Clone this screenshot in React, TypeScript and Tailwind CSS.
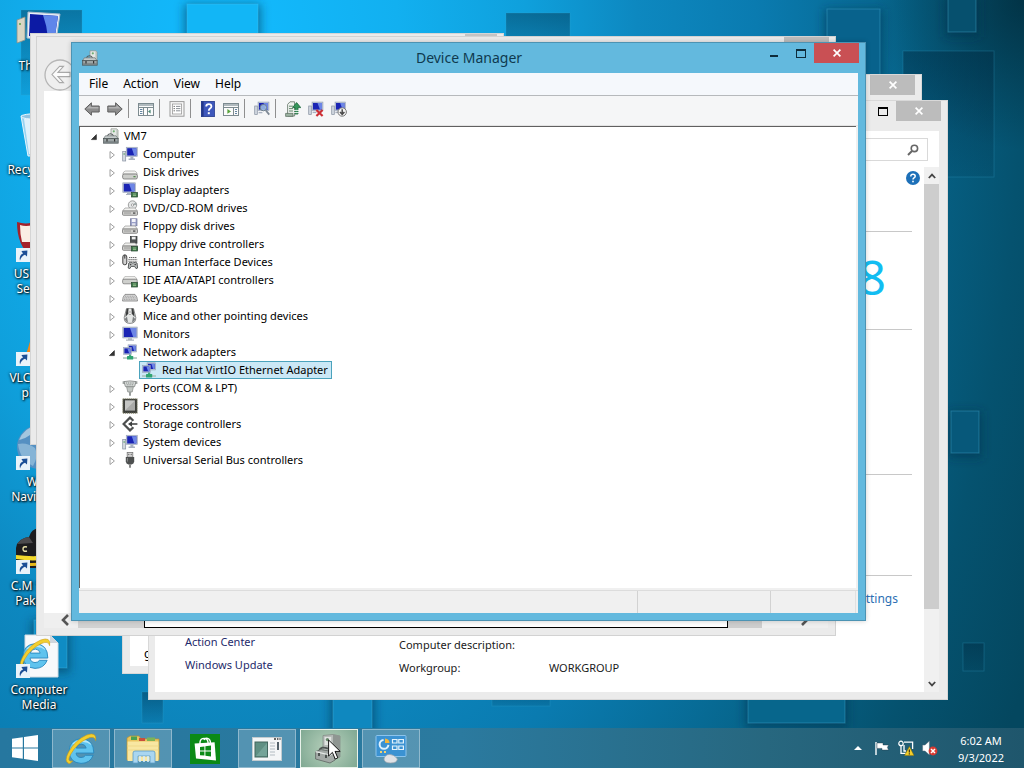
import type { ReactNode } from 'react';

interface IconProps {
  className?: string;
}

interface TreeItem {
  label: string;
  icon: (props: IconProps) => ReactNode;
  children?: TreeItem[];
}

const ICON = 'size-4 shrink-0';

function Svg({ className = ICON, box = '0 0 16 16', children }: { className?: string; box?: string; children: ReactNode }) {
  return (
    <svg viewBox={box} className={className} aria-hidden="true">
      {children}
    </svg>
  );
}

/* ---------- shared glyph parts ---------- */

function Screen({ x, y, w, h }: { x: number; y: number; w: number; h: number }) {
  return (
    <g>
      <rect x={x} y={y} width={w} height={h} fill="#b9c3d6" stroke="#8e9ab0" strokeWidth=".5" />
      <rect x={x + 1} y={y + 1} width={w - 2} height={h - 2} fill="#1a24b4" />
      <path d={`M${x + w / 2} ${y + 1}H${x + w - 1}V${y + h - 1}H${x + w * 0.72}Z`} fill="#6d86e6" />
    </g>
  );
}

function Drive({ y = 8 }: { y?: number }) {
  return (
    <g>
      <path d={`M3 ${y}H13L15.5 ${y + 3}H.5Z`} fill="#f1f1ef" stroke="#9a9a9a" strokeWidth=".7" />
      <rect x=".5" y={y + 3} width="15" height="4.3" rx="1" fill="#cfcfcc" stroke="#777" strokeWidth=".8" />
      <path d={`M2 ${y + 5}H9`} stroke="#8a8a8a" strokeWidth=".8" />
      <rect x="11" y={y + 4.4} width="2.4" height="1.4" fill="#555" />
    </g>
  );
}

function Chip() {
  return (
    <g>
      <rect x="9.5" y="10.5" width="6" height="4.5" fill="#3f7a4c" stroke="#24452c" strokeWidth=".7" />
      <path d="M11 12H14M11 13.6H14" stroke="#b6d2a4" strokeWidth=".7" />
    </g>
  );
}

/* ---------- device icons ---------- */

function DeviceManagerIcon({ className }: IconProps) {
  return (
    <Svg className={className}>
      <path d="M8 .8H13.6L15 2V11H8Z" fill="#e5e8e5" stroke="#899089" strokeWidth=".7" />
      <path d="M13.4 1V11H15V2Z" fill="#b9c0ba" />
      <circle cx="10.8" cy="3.3" r="1.1" fill="#6fae72" />
      <path d="M4.5 8C5 5.2 9.5 5 10.5 8" fill="none" stroke="#565c5e" strokeWidth="1.1" />
      <path d="M2.4 7.8H13L15 10.5H.6Z" fill="#c5cbcb" stroke="#6b7375" strokeWidth=".7" />
      <rect x=".6" y="10.4" width="14.6" height="4.8" fill="#828b8c" stroke="#4c5456" strokeWidth=".7" />
      <path d="M1.4 12H14.4" stroke="#c9cfcf" strokeWidth=".8" />
      <path d="M4 11V13.4M11.6 11V13.4" stroke="#333" strokeWidth="1.2" />
    </Svg>
  );
}

function ComputerIcon({ className }: IconProps) {
  return (
    <Svg className={className}>
      <rect x=".7" y="5.5" width="3" height="9.5" fill="#d5dae0" stroke="#8791a0" strokeWidth=".7" />
      <path d="M1.4 8H3" stroke="#4c9c58" />
      <Screen x={4.2} y={1.2} w={11.2} h={9.3} />
      <path d="M8.4 10.8H11.4V12.6H13V14H6.6V12.6H8.4Z" fill="#a9b2c0" />
    </Svg>
  );
}

function DiskIcon({ className }: IconProps) {
  return (
    <Svg className={className}>
      <path d="M3.2 7H12.8Q14.6 7.4 15.3 10.2H.7Q1.4 7.4 3.2 7Z" fill="#f5f5f3" stroke="#a5a5a3" strokeWidth=".7" />
      <rect x=".6" y="10" width="14.8" height="5" rx="1.6" fill="#cccdca" stroke="#737373" strokeWidth=".8" />
      <rect x="11.4" y="12" width="2.2" height="1.3" fill="#5a8d55" />
    </Svg>
  );
}

function DisplayIcon({ className }: IconProps) {
  return (
    <Svg className={className}>
      <Screen x={0.8} y={0.8} w={12.6} h={9.7} />
      <path d="M5 10.8H9V13H4V12H5Z" fill="#a9b2c0" />
      <Chip />
    </Svg>
  );
}

function DvdIcon({ className }: IconProps) {
  return (
    <Svg className={className}>
      <circle cx="10.5" cy="5" r="4.2" fill="#e4e6e6" stroke="#8b8b8b" strokeWidth=".8" />
      <path d="M10.5 5L13.6 2.2A4 4 0 0 1 14.6 5Z" fill="#9fa9a9" />
      <circle cx="10.5" cy="5" r="1.2" fill="#fff" stroke="#777" strokeWidth=".6" />
      <Drive />
    </Svg>
  );
}

function FloppyIcon({ className }: IconProps) {
  return (
    <Svg className={className}>
      <rect x="8.4" y=".8" width="6.6" height="7" fill="#9aa0c8" stroke="#6e7396" strokeWidth=".7" />
      <rect x="9.8" y="1" width="3.8" height="3" fill="#f4f4fa" />
      <rect x="10" y="5.2" width="3.4" height="2.4" fill="#e2e3ee" />
      <Drive />
    </Svg>
  );
}

function FloppyControllerIcon({ className }: IconProps) {
  return (
    <Svg className={className}>
      <rect x="8.4" y=".6" width="6.6" height="6.6" fill="#4f5354" stroke="#2f3232" strokeWidth=".7" />
      <rect x="9.8" y=".8" width="3.8" height="2.6" fill="#eee" />
      <Drive y={7} />
      <Chip />
    </Svg>
  );
}

function HidIcon({ className }: IconProps) {
  return (
    <Svg className={className}>
      <path d="M.8 3Q.8 .8 2.8 .8T4.8 3V9Q4.8 10.8 2.8 10.8T.8 9Z" fill="#d2d2d2" stroke="#444" strokeWidth="1" />
      <path d="M2.8 1V4.6" stroke="#333" />
      <path d="M7 3.5H14.5M6.4 5.4H15.2M6.4 7.2H15.2" stroke="#666" strokeDasharray="1.4 .6" />
      <path d="M6.8 9Q8 7.6 10.8 9 13.8 7.6 15 9L15.6 14Q14 16 12.6 12.4H9.2Q7.8 16 6.2 14Z" fill="#b9bcbc" stroke="#4b4f4f" strokeWidth=".9" />
      <circle cx="8.6" cy="10.6" r=".8" fill="#444" />
      <circle cx="13.2" cy="10.6" r=".8" fill="#444" />
    </Svg>
  );
}

function IdeIcon({ className }: IconProps) {
  return (
    <Svg className={className}>
      <path d="M2.8 4.6H13L15.2 7.4H.8Z" fill="#f6f6f4" stroke="#a8a8a6" strokeWidth=".7" />
      <rect x=".6" y="7.2" width="14.6" height="4.6" rx="1.4" fill="#cfd0cd" stroke="#7c7c7c" strokeWidth=".8" />
      <Chip />
    </Svg>
  );
}

function KeyboardIcon({ className }: IconProps) {
  return (
    <Svg className={className}>
      <path d="M3 4.4H13Q15.4 6.6 15.5 11H.5Q.6 6.6 3 4.4Z" fill="#dcdcdc" stroke="#7c7c7c" strokeWidth=".8" />
      <path d="M3 6.2H13M2.4 7.8H13.6M2 9.3H14" stroke="#8a8a8a" strokeDasharray="1.1 .6" strokeWidth=".8" />
    </Svg>
  );
}

function MouseIcon({ className }: IconProps) {
  return (
    <Svg className={className}>
      <path d="M4.5 .6Q8 -.4 11.5 .6L13.8 9.5Q14 15.4 8 15.4T2.2 9.5Z" fill="#e4e6e5" stroke="#6e7070" strokeWidth=".8" />
      <path d="M4.6 .8L6.6 .5 6 6 3.4 9Z" fill="#3a3c3c" />
      <path d="M11.4 .8L9.4 .5 10 6 12.6 9Z" fill="#3a3c3c" />
      <circle cx="8" cy="5.2" r="1.4" fill="#fff" stroke="#777" strokeWidth=".6" />
      <path d="M2.8 11L5 8.6 6 14.8Q3.4 14 2.8 11ZM13.2 11L11 8.6 10 14.8Q12.6 14 13.2 11Z" fill="#7b7e80" />
    </Svg>
  );
}

function MonitorIcon({ className }: IconProps) {
  return (
    <Svg className={className}>
      <Screen x={0.8} y={1} w={14.4} h={11} />
      <path d="M6 12.2H10V13.4H12V14.8H4V13.4H6Z" fill="#aeb5c0" />
    </Svg>
  );
}

function NetworkIcon({ className }: IconProps) {
  return (
    <Svg className={className}>
      <Screen x={6} y={0.8} w={8.6} h={7.2} />
      <Screen x={1.4} y={3.4} w={8} h={7} />
      <path d="M7 10.6H9.2V12.6H7Z" fill="#44ad7d" />
      <path d="M1 14H15" stroke="#a7bdb4" strokeWidth="1.4" />
      <rect x="5" y="12" width="6.2" height="3.6" rx=".6" fill="#2fa572" />
    </Svg>
  );
}

function PortsIcon({ className }: IconProps) {
  return (
    <Svg className={className}>
      <path d="M.6 1.2H3V4H.6ZM13 1.2H15.4V4H13Z" fill="#a3a8a6" />
      <path d="M2 1.6Q8 .2 14 1.6L12.6 6.6H3.4Z" fill="#d5d9d7" stroke="#7d8280" strokeWidth=".8" />
      <path d="M4.2 3H12M4.8 4.8H11.4" stroke="#7b817e" strokeDasharray=".9 .9" />
      <path d="M4.6 6.8H11.4L10.2 12H5.8Z" fill="#c1c6c3" stroke="#858a87" strokeWidth=".7" />
      <path d="M8 12V15.8" stroke="#999e9c" strokeWidth="2" />
    </Svg>
  );
}

function ProcessorIcon({ className }: IconProps) {
  return (
    <Svg className={className}>
      <rect x=".8" y=".8" width="14.4" height="14.4" fill="#3d3f3b" stroke="#8b8c6e" strokeDasharray="1 1" />
      <rect x="3" y="2.6" width="10" height="10" fill="#a9aaa8" />
      <path d="M3 2.6H13L3 12.6Z" fill="#c4c5c3" />
    </Svg>
  );
}

function StorageIcon({ className }: IconProps) {
  return (
    <Svg className={className}>
      <path d="M11.4 4.8L8 1.6 1.6 8 8 14.4 11.4 11.2" fill="none" stroke="#4d4f4f" strokeWidth="2.2" />
      <path d="M8 8H15.4" stroke="#5a5c5c" strokeWidth="1.8" />
      <path d="M10 5.2V10.8L6 8Z" fill="#3c3e3e" />
    </Svg>
  );
}

function UsbIcon({ className }: IconProps) {
  return (
    <Svg className={className}>
      <rect x="5.2" y=".5" width="5.6" height="4.6" fill="#dcdcdc" stroke="#777" strokeWidth=".8" />
      <path d="M6.8 1.8V3.2M9.2 1.8V3.2" stroke="#555" />
      <path d="M3.8 5H12.2V9.6Q12 12 9.6 12.6H6.4Q4 12 3.8 9.6Z" fill="#4d4f4f" />
      <path d="M5.4 6V9.6" stroke="#8d8f8f" />
      <path d="M8 12.6V15.8" stroke="#6b6d6d" strokeWidth="1.6" />
    </Svg>
  );
}

/* ---------- toolbar icons ---------- */

function ArrowIcon({ flip }: { flip?: boolean }) {
  return (
    <Svg className={flip ? 'size-4 -scale-x-100' : 'size-4'}>
      <path d="M.8 8L7.4 1.8V5H15.2V11H7.4V14.2Z" fill="#8d8d8d" stroke="#5f5f5f" strokeWidth="1" />
      <path d="M2.6 7.6L6.6 4V6H14.4V7.6Z" fill="#b2b2b2" />
    </Svg>
  );
}

function PaneIcon({ flip }: { flip?: boolean }) {
  return (
    <Svg className="size-4">
      <rect x=".5" y="2.5" width="15" height="12" fill="#fbfbfb" stroke="#7d8b90" />
      <path d="M1 4H15" stroke="#9eabb0" strokeWidth="1.6" />
      <path d="M1 6.5H15" stroke="#7d8b90" />
      {flip ? (
        <g>
          <path d="M10.5 6.5V14" stroke="#7d8b90" />
          <path d="M12 8.5H14M12 10.5H14M12 12.5H14" stroke="#6384a0" />
          <path d="M4.4 8L8 10.4 4.4 12.8Z" fill="#58a33c" />
        </g>
      ) : (
        <g>
          <path d="M5.5 6.5V14M9.5 6.5V14" stroke="#7d8b90" />
          <path d="M2 8.5H4.4M2 10.5H4.4M2 12.5H4.4" stroke="#6384a0" />
          <path d="M12.6 8.4L10 10.4 12.6 12.4Z" fill="#4c8a76" />
        </g>
      )}
    </Svg>
  );
}

function PropertiesIcon() {
  return (
    <Svg className="size-4">
      <rect x="1" y=".6" width="14" height="14.6" fill="#f7f7f7" stroke="#9a9a9a" />
      <rect x="3.4" y="3" width="9.2" height="10" fill="#fff" stroke="#9a9a9a" strokeWidth=".8" />
      <path d="M4.6 5.4H5.8M4.6 7.6H5.8M4.6 9.8H5.8" stroke="#555" />
      <path d="M7 5.4H11.4M7 7.6H11.4M7 9.8H11.4" stroke="#8b9096" />
    </Svg>
  );
}

function HelpIcon() {
  return (
    <Svg className="size-4">
      <rect x="1.4" y=".4" width="13" height="15.2" fill="#3d57bb" stroke="#243a8c" strokeWidth=".8" />
      <rect x="1.4" y=".4" width="2.2" height="15.2" fill="#24388a" />
      <path d="M6.2 5.6Q6.2 3.2 8.8 3.2T11.4 5.4Q11.4 6.6 10 7.4 8.8 8.2 8.8 9.8" fill="none" stroke="#fff" strokeWidth="1.8" />
      <rect x="7.8" y="11.2" width="2" height="2" fill="#fff" />
    </Svg>
  );
}

function ScanIcon() {
  return (
    <Svg className="size-4">
      <rect x=".7" y="5" width="2.6" height="8.5" fill="#cfd6de" stroke="#8791a0" strokeWidth=".7" />
      <Screen x={4} y={1} w={11} h={8.6} />
      <circle cx="9.4" cy="6.6" r="3.2" fill="#a9cdea" fillOpacity=".8" stroke="#70808c" />
      <path d="M11.8 9.2L15.2 13.6" stroke="#7d8894" strokeWidth="1.8" />
      <path d="M4.6 11.6H8.4" stroke="#a9b2c0" strokeWidth="1.4" />
    </Svg>
  );
}

function UpdateDriverIcon() {
  return (
    <Svg className="size-4">
      <path d="M2.6 3.4L5 .8H9.6V15H2.6Z" fill="#eef1ee" stroke="#6f8073" strokeWidth=".9" />
      <path d="M4 5.2H8M4 7.6H8M4 10H8" stroke="#648a6d" />
      <path d="M.6 12.4H8V15.4H.6Z" fill="#9db3a2" stroke="#586b5c" strokeWidth=".7" />
      <path d="M10 13H13V6.6H15.8L11.6 1.6 7.6 6.6H10Z" fill="#35965a" stroke="#1c653a" strokeWidth=".8" />
      <path d="M9 9.4H14M9 11.6H14" stroke="#fff" strokeWidth=".9" />
    </Svg>
  );
}

function UninstallIcon() {
  return (
    <Svg className="size-4">
      <rect x=".7" y="5" width="2.6" height="8.5" fill="#cfd6de" stroke="#8791a0" strokeWidth=".7" />
      <Screen x={4} y={1} w={11} h={8.6} />
      <path d="M4.6 11.4H8.4" stroke="#a9b2c0" strokeWidth="1.4" />
      <path d="M8.4 9L14.6 15M14.6 9L8.4 15" stroke="#cc2f35" strokeWidth="2.2" />
    </Svg>
  );
}

function DisableIcon() {
  return (
    <Svg className="size-4">
      <rect x=".7" y="5" width="2.6" height="8.5" fill="#cfd6de" stroke="#8791a0" strokeWidth=".7" />
      <Screen x={4} y={1} w={10.4} h={8.6} />
      <path d="M4.4 11.4H7" stroke="#a9b2c0" strokeWidth="1.4" />
      <circle cx="11.2" cy="11" r="4.2" fill="#f4f4f4" stroke="#777" />
      <path d="M11.2 8.2V12.6M9 11L11.2 13.4 13.4 11" fill="none" stroke="#4b4b4b" strokeWidth="1.5" />
    </Svg>
  );
}

/* ---------- larger icons ---------- */

function IeIcon({ className }: IconProps) {
  return (
    <Svg box="0 0 32 32" className={className}>
      <path
        d="M27.4 19.6H11.6Q12 23.4 16 23.6 18.8 23.6 20 21.6H26.8Q24 28.8 16 28.8 5.8 28.2 5.4 17.8 6 7.4 16.2 6.8 27.4 7.4 27.4 19.6ZM11.8 15.2H20.6Q20 11.8 16.2 11.6 12.6 11.8 11.8 15.2Z"
        fill="#5fc3ee"
        stroke="#2787bd"
        strokeWidth=".8"
      />
      <path d="M8 12Q11 7.8 17 7.8 23 8.2 25.6 12.6 20 8.6 14 10.4 10 11.6 8 12Z" fill="#b4e8fb" />
      <path d="M5.4 29Q.4 27.2 5 18.6 11 8 21 3.6 30.4 .2 29 8.6 28 3.8 21.4 6.8 12.4 11 7 20.4 2.6 28 8.6 26.6 6.8 29 5.4 29Z" fill="#f3cf2e" stroke="#c99712" strokeWidth=".5" />
    </Svg>
  );
}

function FolderIcon() {
  return (
    <Svg box="0 0 34 30" className="h-[30px] w-[34px]">
      <path d="M1 4L4 2H13L15 5H33V26H1Z" fill="#e9c660" stroke="#b8902f" strokeWidth=".7" />
      <path d="M5 2.5H11V6H5Z" fill="#4aa052" />
      <path d="M13 4H19V7H13Z" fill="#c94f3b" />
      <path d="M21 3.5H29V7H21Z" fill="#7bb457" />
      <path d="M1.6 7.5H32.4V27H1.6Z" fill="#f8e7a2" />
      <path d="M1.6 12H32.4M1.6 16H32.4" stroke="#efd98a" />
      <path d="M7 29V19Q7 17 9 17H27Q29 17 29 19V29H24V22H12V29Z" fill="#a9d6f0" stroke="#5b9cc6" strokeWidth=".8" />
      <path d="M14 22V28M18 22V28M22 22V28" stroke="#d7eefb" strokeWidth="1.6" />
    </Svg>
  );
}

function StoreIcon() {
  return (
    <Svg box="0 0 30 30" className="size-[30px]">
      <rect width="30" height="30" fill="#0b8a16" />
      <path d="M4.6 9.4L24.6 8.2 26 26.4 6 24.6Z" fill="#fff" />
      <path d="M10 12V8Q10.6 4.4 14 4.4T18 8V9M14 6Q15 3.6 17.6 4.4 20.6 5.4 20.4 9" fill="none" stroke="#fff" strokeWidth="1.4" />
      <path d="M10 13L14.4 12.4V16.6H10ZM15.4 12.2L21 11.6V16.6H15.4ZM10 17.6H14.4V21.6L10 21.2ZM15.4 17.6H21V22.4L15.4 21.8Z" fill="#0b8a16" />
    </Svg>
  );
}

function AppWindowIcon() {
  return (
    <Svg box="0 0 30 24" className="h-6 w-[30px]">
      <rect x=".5" y=".5" width="29" height="23" fill="#f4f6f7" stroke="#c3ccd0" />
      <path d="M22 2H24M25 2H26.4M27.4 2H28.6" stroke="#333" strokeWidth="1.4" />
      <rect x="3" y="5" width="12.5" height="15" fill="#5f8f83" stroke="#42665e" />
      <path d="M4 19L15 6V19Z" fill="#74a398" />
      <path d="M18 6H23M18 9H23M18 12H23M18 15H23M18 18H23" stroke="#b3bcc2" />
      <rect x="25" y="5" width="2" height="8" fill="#53616a" />
    </Svg>
  );
}

function ControlPanelIcon() {
  return (
    <Svg box="0 0 32 30" className="h-[30px] w-8">
      <rect x="1" y="1.5" width="30" height="21" rx="1" fill="#3b92d2" stroke="#8cc4ec" />
      <path d="M8.6 6A4.4 4.4 0 1 0 13.4 10.8" fill="none" stroke="#dff1fc" strokeWidth="2" />
      <path d="M10 4.4A5 5 0 0 1 14.6 9H10Z" fill="#f4b53b" />
      <path d="M17.5 5.5H22V9H17.5ZM23.8 5.5H28.4V9H23.8ZM17.5 12H22V15.5H17.5ZM23.8 12H28.4V15.5H23.8Z" fill="#3b92d2" stroke="#e4f3fc" strokeWidth="1.2" />
      <path d="M5 18H7M9 18H11" stroke="#f1d271" strokeWidth="2" />
      <path d="M9 25Q10 20.4 14.6 20.4T22.4 25Q22 29 15.6 29T9 25Z" fill="#dfe2e6" stroke="#9aa2aa" strokeWidth=".7" />
    </Svg>
  );
}

function ToolboxIcon() {
  return (
    <Svg box="0 0 32 32" className="size-8">
      <path d="M10 2.5L20 1.5 27 3V24L18 26H10Z" fill="#b6bbb8" stroke="#7f8681" strokeWidth=".7" />
      <path d="M20 1.5L27 3V24L20 26Z" fill="#8f9692" />
      <rect x="11.6" y="4" width="6.6" height="8" fill="#dfe3e0" />
      <circle cx="14.4" cy="6.6" r="1.6" fill="#688a6c" />
      <path d="M6 18Q8 12.6 15 15.6" fill="none" stroke="#4e5452" strokeWidth="1.8" />
      <path d="M2.6 18.6L8 16.6 22 19V27L17 30 2.6 26Z" fill="#a3a9a6" stroke="#5e6562" strokeWidth=".8" />
      <path d="M2.6 18.6L17 22 22 19.4" fill="none" stroke="#e4e8e6" strokeWidth="1.2" />
      <path d="M6 20V23M13 21.8V25" stroke="#434947" strokeWidth="1.8" />
    </Svg>
  );
}

function StartIcon() {
  return (
    <Svg box="0 0 26 26" className="size-[26px]">
      <path d="M0 3.8L10.8 2.2V12.4H0ZM12 2L26 0V12.4H12ZM0 13.6H10.8V23.8L0 22.2ZM12 13.6H26V26L12 24Z" fill="#fff" />
    </Svg>
  );
}

/* ---------- desktop ---------- */

function ThisPcIcon() {
  return (
    <Svg box="0 0 48 48" className="size-12">
      <path d="M2 14L10 11V34L2 37Z" fill="#d8d6c4" stroke="#8c9088" strokeWidth=".8" />
      <circle cx="5" cy="18" r="1" fill="#58a04a" />
      <path d="M13 6L45 8 41 35 12 32Z" fill="#e9f0f8" stroke="#a5b8cc" />
      <path d="M15 8L43 10 39.6 32.6 14 30Z" fill="#0c1aa4" />
      <path d="M28 9L43 10 39.6 32.6 33 32Q32 20 28 9Z" fill="#5f86ea" />
    </Svg>
  );
}

function RecycleBinIcon() {
  return (
    <Svg box="0 0 48 48" className="size-12">
      <path d="M6 6H42L36 46H13Z" fill="#b8dcf2" fillOpacity=".8" stroke="#e6f5fd" />
      <path d="M9 9H15L19 44H14Z" fill="#dff1fb" />
      <ellipse cx="24" cy="6.5" rx="18" ry="3" fill="#8fc3e2" stroke="#effaff" />
    </Svg>
  );
}

function ShieldIcon() {
  return (
    <Svg box="0 0 48 48" className="size-12">
      <path d="M2 8Q14 12 24 5 34 12 46 8 46 36 24 46 2 38 2 8Z" fill="#a4222b" />
      <path d="M5 11Q14 14 24 8V28H7Q5 20 5 11Z" fill="#fbeee4" />
    </Svg>
  );
}

function VlcIcon() {
  return (
    <Svg box="0 0 48 48" className="size-12">
      <path d="M21 4H27L38 40H10Z" fill="#f08a1c" />
      <path d="M17.6 16H30.4L33 25H15Z" fill="#fff" />
      <path d="M6 38H42L46 46H2Z" fill="#e07510" />
    </Svg>
  );
}

function GlobeIcon() {
  return (
    <Svg box="0 0 48 48" className="size-12">
      <circle cx="24" cy="25" r="22" fill="#5590c2" />
      <path d="M4 18Q9 6 22 3 20 10 15 13 10 17 4 18Z" fill="#a3c6df" />
      <path d="M3 22Q12 20 20 26 24 34 18 44 5 38 3 22Z" fill="#86b4d6" />
    </Svg>
  );
}

function RacerIcon() {
  return (
    <Svg box="0 0 48 48" className="size-12">
      <path d="M2 18Q6 12 14 11 16 3 24 2 44 4 46 18V42H1V22Z" fill="#1d1c1f" />
      <path d="M2 18Q6 12 14 11L18 17Z" fill="#4c4a4d" />
      <path d="M1 29Q24 32 47 27V30Q24 37 1 33Z" fill="#f3d92c" />
      <path d="M1 36Q24 39 47 33V36Q24 42 1 39Z" fill="#e4b81a" />
      <path d="M12 21Q8 20 8 23T12 25" fill="none" stroke="#e8e0a8" strokeWidth="1.4" />
    </Svg>
  );
}

function PageIeIcon() {
  return (
    <div className="relative size-12">
      <Svg box="0 0 48 48" className="size-12">
        <path d="M10 5H35L43 13V47H10Z" fill="#f7f9fb" stroke="#d3dbe2" />
        <path d="M35 5L43 13H35Z" fill="#cfd6dd" />
      </Svg>
      <IeIcon className="absolute top-1.5 left-0.5 size-9" />
    </div>
  );
}

interface Shortcut {
  label: string;
  icon: () => ReactNode;
  linked: boolean;
}

const SHORTCUTS: Shortcut[] = [
  { label: 'This PC', icon: ThisPcIcon, linked: false },
  { label: 'Recycle Bin', icon: RecycleBinIcon, linked: false },
  { label: 'USB Disk Security', icon: ShieldIcon, linked: true },
  { label: 'VLC media player', icon: VlcIcon, linked: true },
  { label: 'Web Navigator', icon: GlobeIcon, linked: true },
  { label: 'C.M Sindh Pakistan', icon: RacerIcon, linked: true },
  { label: 'Computer Media', icon: PageIeIcon, linked: true },
];

function ShortcutArrow() {
  return (
    <Svg box="0 0 14 14" className="absolute bottom-0 left-px size-3.5">
      <rect width="14" height="14" fill="#e9f3fa" />
      <path d="M4 12.4Q2.6 7.4 7 5.6L5.4 3 11.4 2.4 11 8.6 9 6.8Q5.6 8 4 12.4Z" fill="#1c4f96" />
    </Svg>
  );
}

function DesktopIcons() {
  return (
    <ul className="relative flex w-[78px] flex-col pt-1.5">
      {SHORTCUTS.map(({ label, icon: Glyph, linked }) => (
        <li key={label} className="h-[104px]">
          <button className="flex w-full flex-col items-center gap-1 text-center text-xs leading-[15px] text-white [text-shadow:1px_1px_2px_#000,0_0_3px_#000]">
            <span className="relative">
              <Glyph />
              {linked && <ShortcutArrow />}
            </span>
            <span className="px-1">{label}</span>
          </button>
        </li>
      ))}
    </ul>
  );
}

const RAISED = [
  { x: 187, y: 4, w: 71, h: 60, fill: '#12b6f6' },
  { x: 827, y: 9, w: 53, h: 66, fill: '#08628c' },
  { x: 948, y: -4, w: 28, h: 36, fill: '#06506e' },
  { x: 951, y: 411, w: 28, h: 42, fill: '#07587a' },
  { x: 333, y: 680, w: 39, h: 60, fill: '#0f88bf' },
  { x: 748, y: 680, w: 97, h: 43, fill: '#07668c' },
  { x: 34, y: 620, w: 33, h: 48, fill: '#0f8cc4' },
];

const SUNK = [
  { x: 21, y: 10, w: 61, h: 85 },
  { x: 506, y: 13, w: 64, h: 60 },
  { x: 903, y: 51, w: 91, h: 126 },
  { x: 963, y: 643, w: 21, h: 28 },
  { x: 142, y: 692, w: 21, h: 31 },
  { x: 492, y: 680, w: 58, h: 26 },
];

function Wallpaper() {
  return (
    <svg
      viewBox="0 0 1024 768"
      preserveAspectRatio="xMidYMid slice"
      className="absolute inset-0 size-full bg-[radial-gradient(850px_1300px_at_230px_60px,#12bbff_0%,#12b0f0_20%,#0fa0dc_35%,#0d88c0_48%,#0a7bb0_62%,#06648a_80%,#05526f_93%,#04475f_105%)]"
      aria-hidden="true"
    >
      <defs>
        <filter id="soft" x="-50%" y="-50%" width="200%" height="200%">
          <feGaussianBlur stdDeviation="5" />
        </filter>
        <linearGradient id="sunk" x1="0" y1="0" x2="0" y2="1">
          <stop offset="0" stopColor="#002c44" stopOpacity=".45" />
          <stop offset="1" stopColor="#002c44" stopOpacity=".1" />
        </linearGradient>
        <radialGradient id="corner" cx="1" cy="0" r="1">
          <stop offset="0" stopColor="#00202c" stopOpacity=".6" />
          <stop offset="1" stopColor="#00202c" stopOpacity="0" />
        </radialGradient>
      </defs>
      <rect x="874" width="150" height="150" fill="url(#corner)" />
      {RAISED.map(({ x, y, w, h, fill }) => (
        <g key={`${x}-${y}`}>
          <rect x={x - 3} y={y} width={w + 6} height={h + 5} fill="#00304a" fillOpacity=".5" filter="url(#soft)" />
          <rect x={x} y={y} width={w} height={h} fill={fill} stroke="#5cc8ee" strokeOpacity=".3" />
        </g>
      ))}
      {SUNK.map(({ x, y, w, h }) => (
        <rect key={`${x}-${y}`} x={x} y={y} width={w} height={h} fill="url(#sunk)" stroke="#3aa7cf" strokeOpacity=".25" />
      ))}
    </svg>
  );
}

/* ---------- caption buttons ---------- */

function CloseGlyph() {
  return (
    <Svg box="0 0 8 8" className="size-2">
      <path d="M.6 .6L7.4 7.4M7.4 .6L.6 7.4" stroke="#fff" strokeWidth="1.7" />
    </Svg>
  );
}

function MaximizeGlyph({ className = 'text-black' }: IconProps) {
  return (
    <Svg box="0 0 10 9" className={`h-[9px] w-2.5 ${className}`}>
      <path d="M0 0H10V9H0ZM1 2V8H9V2Z" fill="currentColor" fillRule="evenodd" />
    </Svg>
  );
}

function InactiveClose() {
  return (
    <button aria-label="Close" className="flex h-5 w-[45px] items-center justify-center bg-[#bcbcbc]">
      <CloseGlyph />
    </button>
  );
}

/* ---------- background windows ---------- */

function BackWindow() {
  return (
    <section className="absolute top-[33px] left-[30px] h-[412px] w-[474px] border border-[#d5d5d5] bg-[#ebebeb]">
      <div className="flex justify-end pr-1.5">
        <div className="h-5 w-8 bg-[#c4c4c4]" />
      </div>
    </section>
  );
}

function WizardWindow() {
  return (
    <section className="absolute top-9 left-9 flex h-[600px] w-[800px] flex-col border border-[#d2d2d2] bg-[#ebebeb] px-[7px] pb-[7px]">
      <div className="-mr-px flex h-[54px] justify-between">
        <button aria-label="Back" className="mt-[22px] h-8">
          <Svg box="0 0 32 32" className="size-8">
            <circle cx="16" cy="16" r="15" fill="#efefef" stroke="#b5b5b5" strokeWidth="1.3" />
            <path d="M15.5 7.4L8 15.5 15.5 23.6H19.5L14 17.6H26V13.4H14L19.5 7.4Z" fill="#fbfbfb" stroke="#a9a9a9" strokeWidth="1.1" />
          </Svg>
        </button>
        <div className="h-5 w-[45px] bg-[#bcbcbc]" />
      </div>
      <div className="flex-1 bg-white" />
      <div className="flex h-[15px] items-stretch bg-[#efefef]">
        <button aria-label="Scroll left" className="flex w-[34px] items-center justify-center pb-0.5 pl-2">
          <Svg box="0 0 10 12" className="h-3 w-2.5">
            <path d="M8 1L3 6 8 11" fill="none" stroke="#555" strokeWidth="2.6" />
          </Svg>
        </button>
        <div className="w-[66px] bg-[#d2d2d2]" />
        <div className="w-[584px] border border-black bg-white" />
        <div className="w-[34px] bg-[#cdcdcd]" />
        <button aria-label="Scroll right" className="flex flex-1 items-center justify-center pb-0.5 pl-5">
          <Svg box="0 0 10 12" className="h-3 w-2.5">
            <path d="M2 1L7 6 2 11" fill="none" stroke="#555" strokeWidth="2.6" />
          </Svg>
        </button>
      </div>
    </section>
  );
}

function SettingsWindow() {
  return (
    <section className="absolute top-[74px] left-[122px] flex h-[600px] w-[800px] flex-col border border-[#d8d8d8] bg-[#ebebeb] px-[7px] pb-[7px]">
      <div className="-mr-px flex h-[30px] justify-end">
        <InactiveClose />
      </div>
      <div className="flex flex-1 items-end bg-white pb-1 pl-3.5 text-xs">g</div>
    </section>
  );
}

function SystemWindow() {
  return (
    <section className="absolute top-[100px] left-[148px] flex h-[600px] w-[800px] flex-col border border-[#d8d8d8] bg-[#ebebeb] pr-2 pb-[7px] pl-1.5 text-[11px] text-[#1a1a1a]">
      <div className="-mr-0.5 flex h-[30px] items-start justify-end">
        <button aria-label="Maximize" className="flex h-5 w-[27px] items-center justify-center">
          <MaximizeGlyph />
        </button>
        <InactiveClose />
      </div>
      <div className="flex min-h-0 flex-1 flex-col bg-white">
        <div className="flex justify-end pt-[7px] pr-[11px]">
          <label className="flex h-[23px] w-48 items-center border border-[#d9d9d9] pr-2">
            <input aria-label="Search Control Panel" className="min-w-0 flex-1 outline-none" />
            <Svg box="0 0 12 12" className="size-3">
              <circle cx="7.4" cy="4.4" r="3.2" fill="none" stroke="#666" strokeWidth="1.6" />
              <path d="M5 7L1 11" stroke="#666" strokeWidth="2" />
            </Svg>
          </label>
        </div>
        <div className="flex min-h-0 flex-1 pt-1.5">
          <nav className="flex w-[244px] flex-col justify-end gap-[5px] pb-[18px] pl-[30px] leading-[18px] text-[#1e2a6b]">
            <a href="#action-center">Action Center</a>
            <a href="#windows-update">Windows Update</a>
          </nav>
          <div className="flex min-w-0 flex-1 flex-col">
            <div className="h-[65px] border-b border-[#c8c8c8]" />
            <div className="flex h-[98px] items-center justify-end border-b border-[#c8c8c8] pr-[26px] pb-2 text-5xl text-[#12bdf2]">
              Windows 8
            </div>
            <div className="h-[145px] border-b border-[#c8c8c8]" />
            <div className="h-[101px] border-b border-[#c8c8c8]" />
            <a href="#change-settings" className="flex h-[46px] items-center justify-end pr-3.5 text-xs text-[#2c6fb4]">
              Change settings
            </a>
            <dl className="mt-[11px] grid grid-cols-[150px_1fr] leading-[23px]">
              <dt>Computer description:</dt>
              <dd />
              <dt>Workgroup:</dt>
              <dd>WORKGROUP</dd>
            </dl>
          </div>
          <div className="w-3 pt-1">
            <Svg box="0 0 14 14" className="-ml-1.5 size-3.5">
              <circle cx="7" cy="7" r="7" fill="#1d70b8" />
              <path d="M4.8 5.4Q4.8 3.2 7 3.2T9.2 5.2Q9.2 6.2 8 6.9 7 7.5 7 8.6" fill="none" stroke="#fff" strokeWidth="1.5" />
              <rect x="6.2" y="9.7" width="1.6" height="1.6" fill="#fff" />
            </Svg>
          </div>
          <div className="flex w-[15px] flex-col bg-[#f0f0f0]">
            <button aria-label="Scroll up" className="flex h-[17px] items-center justify-center">
              <Svg box="0 0 8 6" className="h-1.5 w-2">
                <path d="M.8 5L4 1.6 7.2 5" fill="none" stroke="#444" strokeWidth="1.8" />
              </Svg>
            </button>
            <div className="flex-1 bg-[#cdcdcd]" />
            <div className="h-[66px]" />
            <button aria-label="Scroll down" className="flex h-[17px] items-center justify-center">
              <Svg box="0 0 8 6" className="h-1.5 w-2">
                <path d="M.8 1L4 4.4 7.2 1" fill="none" stroke="#444" strokeWidth="1.8" />
              </Svg>
            </button>
          </div>
        </div>
      </div>
    </section>
  );
}

/* ---------- device manager ---------- */

const DEVICES: TreeItem[] = [
  { label: 'Computer', icon: ComputerIcon },
  { label: 'Disk drives', icon: DiskIcon },
  { label: 'Display adapters', icon: DisplayIcon },
  { label: 'DVD/CD-ROM drives', icon: DvdIcon },
  { label: 'Floppy disk drives', icon: FloppyIcon },
  { label: 'Floppy drive controllers', icon: FloppyControllerIcon },
  { label: 'Human Interface Devices', icon: HidIcon },
  { label: 'IDE ATA/ATAPI controllers', icon: IdeIcon },
  { label: 'Keyboards', icon: KeyboardIcon },
  { label: 'Mice and other pointing devices', icon: MouseIcon },
  { label: 'Monitors', icon: MonitorIcon },
  {
    label: 'Network adapters',
    icon: NetworkIcon,
    children: [{ label: 'Red Hat VirtIO Ethernet Adapter', icon: NetworkIcon }],
  },
  { label: 'Ports (COM & LPT)', icon: PortsIcon },
  { label: 'Processors', icon: ProcessorIcon },
  { label: 'Storage controllers', icon: StorageIcon },
  { label: 'System devices', icon: ComputerIcon },
  { label: 'Universal Serial Bus controllers', icon: UsbIcon },
];

function Toggle({ open, label }: { open: boolean; label: string }) {
  return (
    <button aria-label={label} aria-expanded={open} className="flex size-4 shrink-0 items-center justify-center pt-0.5">
      <Svg box="0 0 8 8" className="size-2">
        {open ? (
          <path d="M6.4 1.6V6.6H1.4Z" fill="#333" stroke="#222" strokeWidth=".6" />
        ) : (
          <path d="M2 .5L6.4 4 2 7.5Z" fill="#fff" stroke="#969696" strokeWidth=".9" />
        )}
      </Svg>
    </button>
  );
}

function DeviceTree() {
  return (
    <div className="flex-1 border-t border-l border-[#606060] bg-white pl-1.5 text-[11px]">
      <div className="flex h-[18px] items-center gap-px">
        <Toggle open label="VM7" />
        <DeviceManagerIcon />
        <span className="pl-1">VM7</span>
      </div>
      <ul className="pl-[18px]">
        {DEVICES.map(({ label, icon: Glyph, children }) => (
          <li key={label}>
            <div className="flex h-[18px] items-center gap-0.5">
              <Toggle open={!!children} label={label} />
              <Glyph />
              <span className="pl-[3px]">{label}</span>
            </div>
            {children?.map(({ label: name, icon: ChildGlyph }) => (
              <div key={name} className="ml-[35px] flex h-[18px] w-fit items-center gap-[5px] border border-[#4ba3bd] bg-[#cbe8f6] pr-[3px] pl-px">
                <ChildGlyph />
                <span>{name}</span>
              </div>
            ))}
          </li>
        ))}
      </ul>
    </div>
  );
}

function ToolButton({ label, children }: { label: string; children: ReactNode }) {
  return (
    <button aria-label={label} className="flex w-[23px] items-center justify-center">
      {children}
    </button>
  );
}

function Divider() {
  return <span className="mr-[5px] ml-0.5 h-[19px] w-px bg-[#8f8f8f]" />;
}

function Toolbar() {
  return (
    <div className="flex h-[30px] items-center border-b border-[#e3e3e3] bg-[#f5f6f7] pb-1 pl-px">
      <ToolButton label="Back">
        <ArrowIcon />
      </ToolButton>
      <ToolButton label="Forward">
        <ArrowIcon flip />
      </ToolButton>
      <Divider />
      <ToolButton label="Show console tree">
        <PaneIcon />
      </ToolButton>
      <Divider />
      <ToolButton label="Properties">
        <PropertiesIcon />
      </ToolButton>
      <Divider />
      <ToolButton label="Help">
        <HelpIcon />
      </ToolButton>
      <ToolButton label="Show action pane">
        <PaneIcon flip />
      </ToolButton>
      <Divider />
      <ToolButton label="Scan for hardware changes">
        <ScanIcon />
      </ToolButton>
      <Divider />
      <ToolButton label="Update driver">
        <UpdateDriverIcon />
      </ToolButton>
      <ToolButton label="Uninstall">
        <UninstallIcon />
      </ToolButton>
      <ToolButton label="Disable">
        <DisableIcon />
      </ToolButton>
    </div>
  );
}

function DeviceManagerWindow() {
  return (
    <section className="absolute top-[42px] left-[71px] flex h-[579px] w-[795px] flex-col border border-[#4c93b3] bg-[#63b9de] px-[7px] pb-[7px] text-xs text-black shadow-[0_0_5px_rgba(0,0,0,0.2)]">
      <header className="-mr-px grid h-[30px] grid-cols-[1fr_auto_1fr] items-center">
        <DeviceManagerIcon className="ml-[3px] size-4" />
        <h1 className="text-sm text-[#0f3a4f]">Device Manager</h1>
        <div className="flex items-start justify-end self-start">
          <button aria-label="Minimize" className="flex h-5 w-[27px] items-center justify-center pt-1.5">
            <span className="h-0.5 w-2 bg-[#0e2c3a]" />
          </button>
          <button aria-label="Maximize" className="flex h-5 w-[27px] items-center justify-center">
            <MaximizeGlyph className="text-[#0e2c3a]" />
          </button>
          <button aria-label="Close" className="flex h-5 w-[45px] items-center justify-center bg-[#c95054]">
            <CloseGlyph />
          </button>
        </div>
      </header>
      <div className="flex min-h-0 flex-1 flex-col bg-[#f0f0f0]">
        <nav className="flex h-[23px] items-center gap-[15px] border-b border-[#b6b9bc] bg-[#f5f8fc] pl-2.5">
          <button>File</button>
          <button>Action</button>
          <button>View</button>
          <button>Help</button>
        </nav>
        <Toolbar />
        <div className="flex min-h-0 flex-1 flex-col pr-0.5">
          <DeviceTree />
        </div>
        <footer className="mt-0.5 grid h-[23px] grid-cols-[1fr_133px_85px] border-t border-[#dcdcdc] pr-0.5">
          <div className="border-r border-[#d2d2d2]" />
          <div className="border-r border-[#d2d2d2]" />
          <div className="border-r border-[#e0e0e0]" />
        </footer>
      </div>
    </section>
  );
}

/* ---------- taskbar ---------- */

const TASK = 'flex h-[39px] w-[58px] items-center justify-center border';
const TASK_OPEN = 'border-white/35 bg-white/20';

function Taskbar() {
  return (
    <footer className="relative flex h-10 items-end gap-1 bg-[linear-gradient(90deg,#26779f,#2b7a9f_45%,#27677f_75%,#1f566c)] text-xs text-white">
      <button aria-label="Start" className="flex h-full w-12 items-center justify-center pl-0.5">
        <StartIcon />
      </button>
      <button aria-label="Internet Explorer" className={`${TASK} ${TASK_OPEN}`}>
        <IeIcon className="size-9" />
      </button>
      <button aria-label="File Explorer" className={`${TASK} ${TASK_OPEN}`}>
        <FolderIcon />
      </button>
      <button aria-label="Store" className={`${TASK} border-transparent`}>
        <StoreIcon />
      </button>
      <button aria-label="Devices" className={`${TASK} ${TASK_OPEN}`}>
        <AppWindowIcon />
      </button>
      <button aria-label="Device Manager" className={`${TASK} border-[#e8f2ea] bg-[radial-gradient(circle_at_50%_50%,#b9d2bd,#7fa892)]`}>
        <ToolboxIcon />
      </button>
      <button aria-label="Control Panel" className={`${TASK} ${TASK_OPEN}`}>
        <ControlPanelIcon />
      </button>

      <div className="ml-auto flex h-full items-center">
        <div className="flex items-center gap-2">
          <button aria-label="Show hidden icons" className="flex w-4 justify-center">
            <Svg box="0 0 8 4" className="h-1 w-2">
              <path d="M0 4L4 0 8 4Z" fill="#fff" />
            </Svg>
          </button>
          <button aria-label="Action Center">
            <Svg>
              <path d="M2 2V15" stroke="#fff" strokeWidth="1.4" />
              <path d="M3 3H9V5H14.6L13.4 7.4 14.6 10H8V8.4H3Z" fill="#fff" stroke="#234" strokeWidth=".4" />
            </Svg>
          </button>
          <button aria-label="Network">
            <Svg>
              <circle cx="3" cy="3.4" r="2.2" fill="none" stroke="#fff" strokeWidth="1.2" />
              <path d="M3 5.6V13.4H8M6 2.2H14.6V9M6 5V11H8" fill="none" stroke="#fff" strokeWidth="1.3" />
              <path d="M11.4 6.4L16 15.4H6.6Z" fill="#f6cf2b" stroke="#8f7106" strokeWidth=".5" />
              <path d="M11.3 9.4V12.4M11.3 13.2V14.4" stroke="#222" strokeWidth="1.1" />
            </Svg>
          </button>
          <button aria-label="Volume">
            <Svg>
              <path d="M.6 5H3L7.4 1V15L3 11H.6Z" fill="#fff" stroke="#567" strokeWidth=".5" />
              <circle cx="11" cy="11" r="4.4" fill="#d93a31" />
              <path d="M9 9L13 13M13 9L9 13" stroke="#fff" strokeWidth="1.5" />
            </Svg>
          </button>
        </div>
        <time className="w-[86px] pt-0.5 text-center text-[11px] leading-[17px]">
          6:02 AM
          <br />
          9/3/2022
        </time>
      </div>
    </footer>
  );
}

function Cursor() {
  return (
    <Svg box="0 0 13 21" className="pointer-events-none absolute bottom-2 left-[328px] h-[21px] w-[13px]">
      <path d="M.6 1V17L4.4 13.4 7.2 20 9.8 18.9 7 12.4H12.2Z" fill="#fff" stroke="#000" strokeWidth=".9" />
    </Svg>
  );
}

export default function App() {
  return (
    <main className="relative flex h-screen w-full cursor-default flex-col overflow-hidden bg-[#0c87bd] font-['Noto_Sans','Open_Sans',sans-serif]">
      <Wallpaper />
      <div className="relative min-h-0 flex-1">
        <DesktopIcons />
        <SettingsWindow />
        <SystemWindow />
        <BackWindow />
        <WizardWindow />
        <DeviceManagerWindow />
      </div>
      <Taskbar />
      <Cursor />
    </main>
  );
}
